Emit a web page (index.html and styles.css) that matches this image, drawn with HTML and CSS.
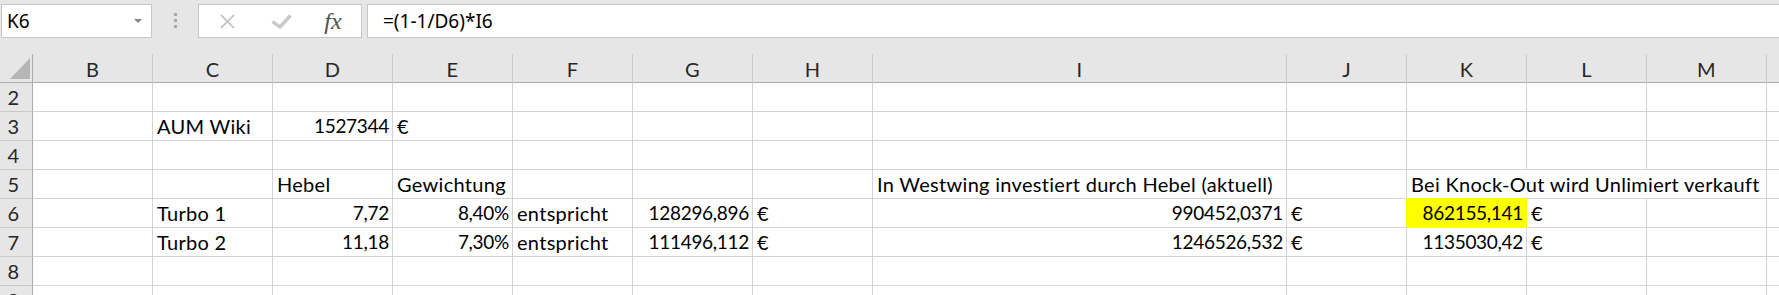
FILE: index.html
```html
<!DOCTYPE html>
<html>
<head>
<meta charset="utf-8">
<title>Turbo</title>
<link rel="stylesheet" href="styles.css">
</head>
<body>

<div class="bar">
  <div class="namebox">K6<span class="arrow"></span></div>
  <div class="dots"><span></span><span></span><span></span></div>
  <div class="fxbox">
    <span class="slot s1">
      <svg width="15" height="15" viewBox="0 0 15 15"><path d="M1 1L14 14M14 1L1 14" stroke="#bdbdbd" stroke-width="1.6" fill="none"/></svg>
    </span>
    <span class="slot s2">
      <svg width="21" height="15" viewBox="0 0 21 15"><path d="M1.5 7.5L9 13L19.5 1.5" stroke="#c9c9c9" stroke-width="3.4" fill="none"/></svg>
    </span>
    <span class="slot s3"><i class="fx">fx</i></span>
  </div>
  <div class="formula">=(1-1/D6)*I6</div>
</div>

<div class="sheet">
  <!-- column headers -->
  <div class="corner"><svg width="20" height="21" viewBox="0 0 20 21"><polygon points="20,0 20,21 0,21" fill="#b5b5b5"/></svg></div>
  <div class="hd">B</div><div class="hd">C</div><div class="hd">D</div><div class="hd">E</div>
  <div class="hd">F</div><div class="hd">G</div><div class="hd">H</div><div class="hd">I</div>
  <div class="hd">J</div><div class="hd">K</div><div class="hd">L</div><div class="hd">M</div>
  <div class="hd last"></div>

  <!-- row 2 -->
  <div class="rh">2</div>
  <div class="c"></div><div class="c"></div><div class="c"></div><div class="c"></div>
  <div class="c"></div><div class="c"></div><div class="c"></div><div class="c"></div>
  <div class="c"></div><div class="c"></div><div class="c"></div><div class="c"></div>
  <div class="c last"></div>

  <!-- row 3 -->
  <div class="rh">3</div>
  <div class="c"></div>
  <div class="c">AUM Wiki</div>
  <div class="c num">1527344</div>
  <div class="c">€</div>
  <div class="c"></div><div class="c"></div><div class="c"></div><div class="c"></div>
  <div class="c"></div><div class="c"></div><div class="c"></div><div class="c"></div>
  <div class="c last"></div>

  <!-- row 4 -->
  <div class="rh">4</div>
  <div class="c"></div><div class="c"></div><div class="c"></div><div class="c"></div>
  <div class="c"></div><div class="c"></div><div class="c"></div><div class="c"></div>
  <div class="c"></div><div class="c"></div><div class="c"></div><div class="c"></div>
  <div class="c last"></div>

  <!-- row 5 -->
  <div class="rh">5</div>
  <div class="c"></div><div class="c"></div>
  <div class="c">Hebel</div>
  <div class="c">Gewichtung</div>
  <div class="c"></div><div class="c"></div><div class="c"></div>
  <div class="c">In Westwing investiert durch Hebel (aktuell)</div>
  <div class="c"></div>
  <div class="c span3">Bei Knock-Out wird Unlimiert verkauft</div>
  <div class="c last"></div>

  <!-- row 6 -->
  <div class="rh">6</div>
  <div class="c"></div>
  <div class="c">Turbo 1</div>
  <div class="c num">7,72</div>
  <div class="c num">8,40%</div>
  <div class="c">entspricht</div>
  <div class="c num">128296,896</div>
  <div class="c">€</div>
  <div class="c num">990452,0371</div>
  <div class="c">€</div>
  <div class="c num hl">862155,141</div>
  <div class="c">€</div>
  <div class="c"></div>
  <div class="c last"></div>

  <!-- row 7 -->
  <div class="rh">7</div>
  <div class="c"></div>
  <div class="c">Turbo 2</div>
  <div class="c num">11,18</div>
  <div class="c num">7,30%</div>
  <div class="c">entspricht</div>
  <div class="c num">111496,112</div>
  <div class="c">€</div>
  <div class="c num">1246526,532</div>
  <div class="c">€</div>
  <div class="c num">1135030,42</div>
  <div class="c">€</div>
  <div class="c"></div>
  <div class="c last"></div>

  <!-- row 8 -->
  <div class="rh">8</div>
  <div class="c"></div><div class="c"></div><div class="c"></div><div class="c"></div>
  <div class="c"></div><div class="c"></div><div class="c"></div><div class="c"></div>
  <div class="c"></div><div class="c"></div><div class="c"></div><div class="c"></div>
  <div class="c last"></div>

  <!-- row 9 -->
  <div class="rh">9</div>
  <div class="c"></div><div class="c"></div><div class="c"></div><div class="c"></div>
  <div class="c"></div><div class="c"></div><div class="c"></div><div class="c"></div>
  <div class="c"></div><div class="c"></div><div class="c"></div><div class="c"></div>
  <div class="c last"></div>
</div>

</body>
</html>
```

FILE: styles.css
```css
* {
    box-sizing: border-box;
}

body {
    margin: 0;
    height: 295px;
    overflow: hidden;
    background: #e6e6e6;
    font-family: "Lato", "Liberation Sans", sans-serif;
}

/* formula bar */
.bar {
    display: flex;
    height: 54px;
    padding-top: 4px;
    font-family: "Noto Sans", sans-serif;
    font-size: 19px;
}

.namebox {
    display: flex;
    align-items: center;
    width: 151px;
    height: 34px;
    margin-left: 1px;
    padding-left: 5px;
    background: #fff;
    border: 1px solid #c6c6c6;
}

.arrow {
    margin-left: auto;
    margin-right: 9px;
    width: 0;
    height: 0;
    border-left: 4px solid transparent;
    border-right: 4px solid transparent;
    border-top: 4px solid #858585;
}

.dots {
    display: flex;
    flex-direction: column;
    align-items: center;
    gap: 3px;
    width: 46px;
    padding-top: 9px;
}
.dots span {
    width: 3px;
    height: 3px;
    background: #a8a8a8;
}

.fxbox {
    display: flex;
    align-items: center;
    width: 164px;
    height: 34px;
    background: #fff;
    border: 1px solid #c6c6c6;
}
.slot {
    display: flex;
    justify-content: center;
    align-items: center;
}
.s1 {width: 56px;}
.s2 {width: 52px;}
.s3 {width: 54px;}

.fx {
    font-family: "Liberation Serif", serif;
    font-size: 24px;
    color: #505050;
    padding-right: 2px;
}

.formula {
    flex: 1;
    display: flex;
    align-items: center;
    height: 34px;
    margin-left: 5px;
    padding-left: 15px;
    background: #fff;
    border: 1px solid #c6c6c6;
    border-right: none;
}

/* sheet grid */
.sheet {
    display: grid;
    grid-template-columns: 33px repeat(7, 120px) 414px repeat(4, 120px) 1fr;
    grid-auto-rows: 29px;
    background: #fff;
    font-size: 20px;
    letter-spacing: 0.3px;
}

.corner {
    display: flex;
    justify-content: flex-end;
    align-items: flex-end;
    padding: 0 2px 3px 0;
    background: #e6e6e6;
    border-right: 1px solid #ababab;
    border-bottom: 1px solid #ababab;
}

.hd {
    display: flex;
    justify-content: center;
    align-items: flex-end;
    padding-bottom: 1px;
    background: #e6e6e6;
    color: #262626;
    border-right: 1px solid #c9c9c9;
    border-bottom: 1px solid #ababab;
}

.rh {
    display: flex;
    justify-content: center;
    align-items: flex-end;
    padding: 0 5px 2px 0;
    background: #e6e6e6;
    color: #262626;
    border-right: 1px solid #ababab;
    border-bottom: 1px solid #c9c9c9;
}

.c {
    display: flex;
    align-items: flex-end;
    padding: 0 3px 2px 4px;
    white-space: nowrap;
    color: #000;
    border-right: 1px solid #d4d4d4;
    border-bottom: 1px solid #d4d4d4;
}

/* Lato digits run wider than the sheet's, so numbers get a tighter setting */
.num {
    justify-content: flex-end;
    font-size: 19px;
    letter-spacing: -0.3px;
    padding-bottom: 3px;
}
.span3 {grid-column: span 3;}
.last {border-right: none;}

.hl {
    background: #ffff00;
    border-color: #ffff00;
    box-shadow: -1px -1px 0 #ffff00;
}
```
